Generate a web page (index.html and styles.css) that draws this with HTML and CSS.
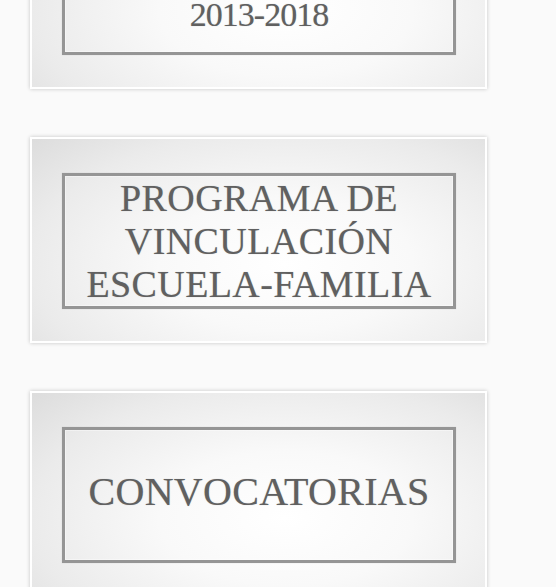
FILE: index.html
```html
<!DOCTYPE html>
<html lang="es">
<head>
<meta charset="utf-8">
<title>Programas</title>
<link rel="stylesheet" href="styles.css">
</head>
<body>
<div class="list">
  <a class="card" href="#">
    <span class="frame frame-top">
      <span class="label years">2013-2018</span>
    </span>
  </a>
  <a class="card" href="#">
    <span class="frame">
      <span class="label">PROGRAMA DE</span>
      <span class="label">VINCULACIÓN</span>
      <span class="label">ESCUELA-FAMILIA</span>
    </span>
  </a>
  <a class="card" href="#">
    <span class="frame">
      <span class="label single">CONVOCATORIAS</span>
    </span>
  </a>
</div>
</body>
</html>
```
FILE: styles.css
```css
html, body {
  margin: 0;
  padding: 0;
  background: #fafafa;
}
body {
  font-family: "Liberation Serif", "Times New Roman", serif;
  overflow: hidden;
}
.list {
  display: flex;
  flex-direction: column;
  gap: 48px;
  margin-top: -117px;
  padding-left: 30px;
}
.card {
  box-sizing: border-box;
  display: flex;
  width: 457px;
  height: 206px;
  border: 2px solid #ffffff;
  padding: 34px 29px 32px 30px;
  background: radial-gradient(ellipse 80% 95% at 56% 62%, #ffffff 0%, #f9f9f9 35%, #ebebeb 70%, #dadada 100%);
  box-shadow: 0 0 4px rgba(0, 0, 0, 0.22);
  text-decoration: none;
}
.frame {
  box-sizing: border-box;
  flex: 1;
  min-width: 0;
  overflow: hidden;
  display: flex;
  flex-direction: column;
  align-items: center;
  justify-content: center;
  border: 3px solid #959595;
  box-shadow: inset 0 0 0 1px rgba(255,255,255,0.4), 0 0 1px rgba(0,0,0,0.15);
}
.frame-top {
  justify-content: flex-end;
  padding-bottom: 19px;
}
.label {
  display: block;
  font-size: 38px;
  line-height: 43px;
  letter-spacing: 0.4px;
  color: #606060;
  text-shadow: 0 0 1px rgba(60, 60, 60, 0.35);
  white-space: nowrap;
}
.years {
  font-size: 34px;
  line-height: 36px;
  letter-spacing: -1px;
}
.single {
  font-size: 40px;
  letter-spacing: 0.3px;
  padding-bottom: 7px;
}
```
